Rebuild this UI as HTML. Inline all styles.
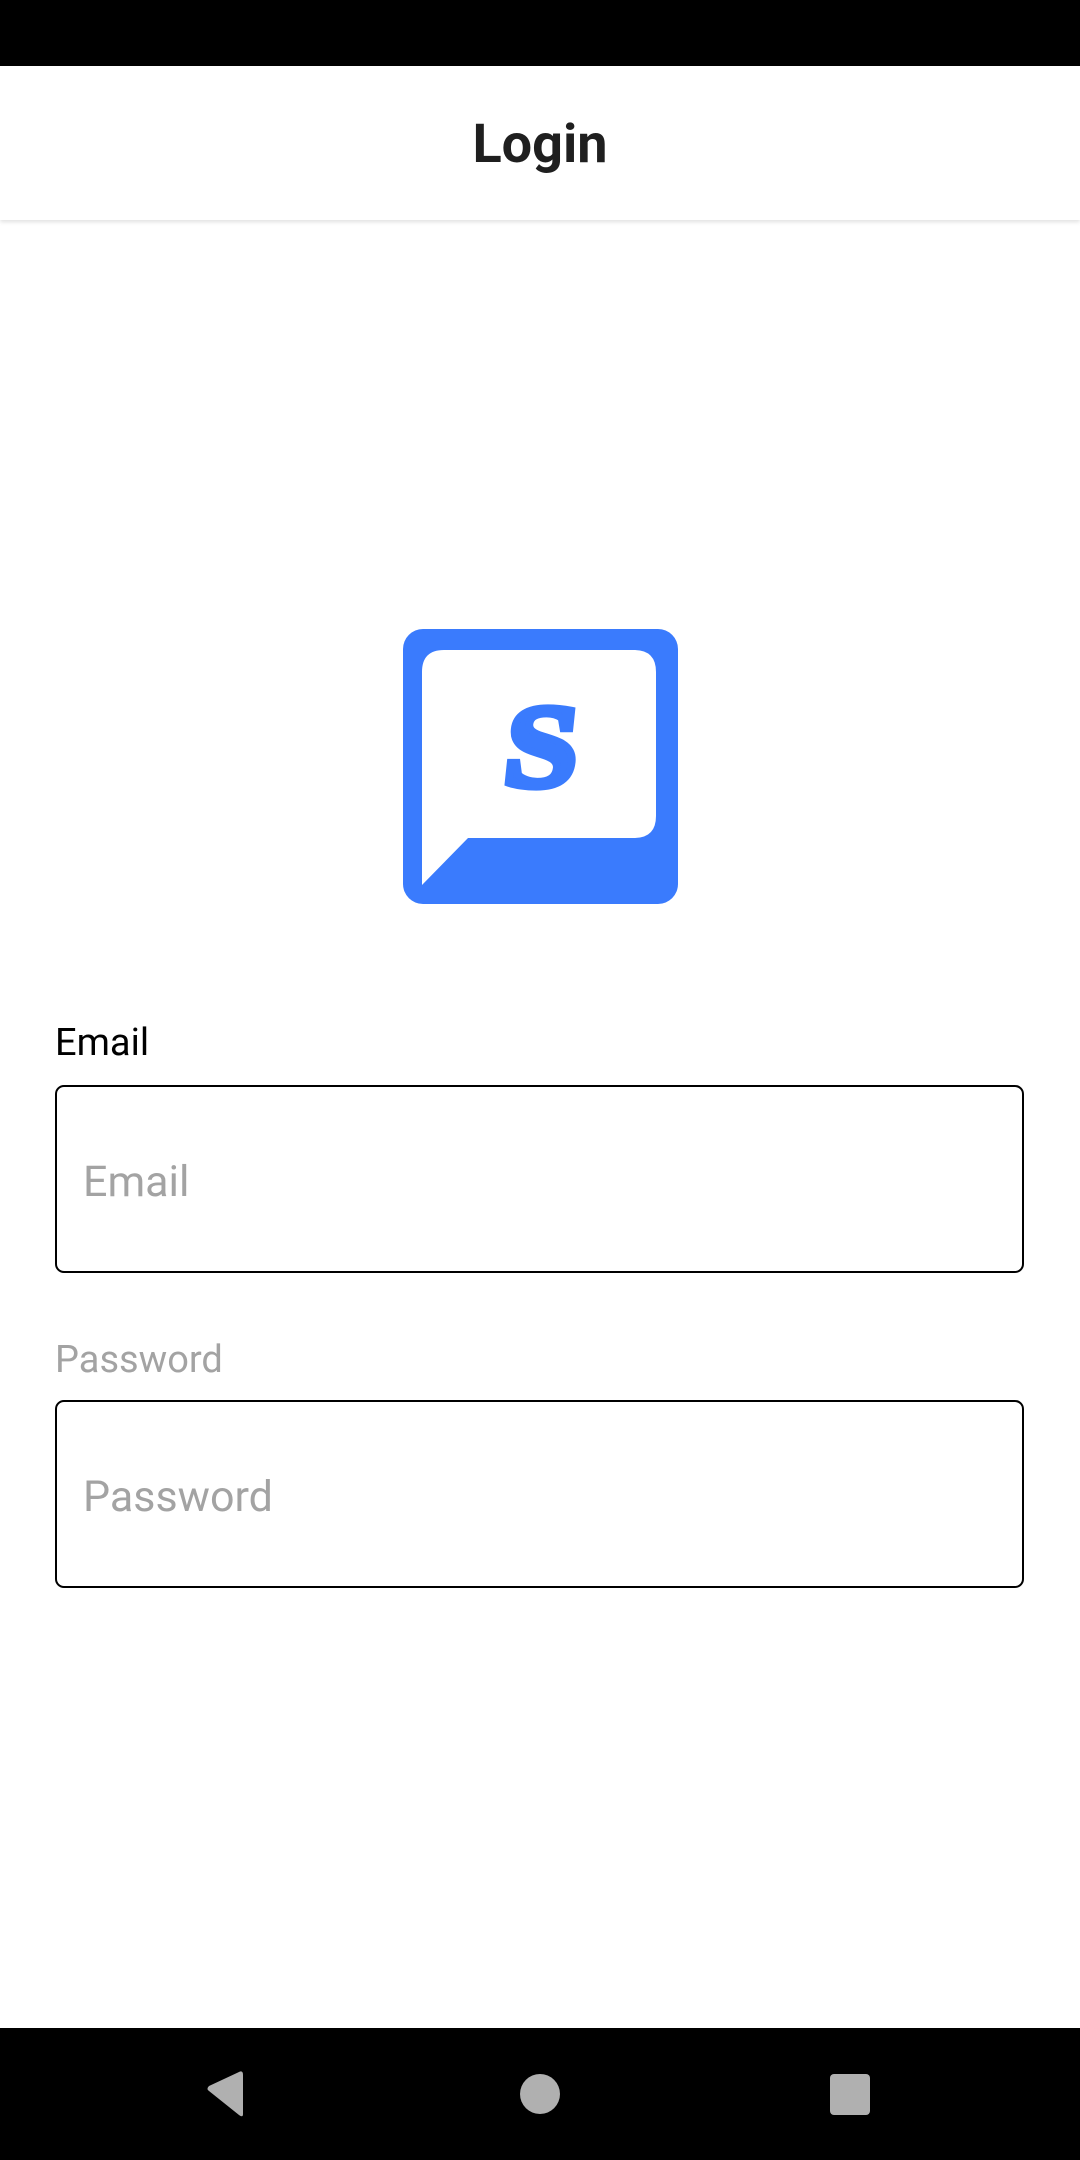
<!DOCTYPE html>
<html><head><meta charset="utf-8"><style>
html,body{margin:0;padding:0;width:1080px;height:2160px;background:#fff;overflow:hidden;font-family:"Roboto","Liberation Sans",sans-serif;position:relative}
.abs{position:absolute}
</style></head><body>
<div class="abs" style="left:0;top:0;width:1080px;height:66px;background:#000"></div>
<div class="abs" style="left:0;top:66px;width:1080px;height:154px;background:#fff;box-shadow:0 2px 4px rgba(0,0,0,0.12)"></div>
<div class="abs" style="left:0;top:112px;width:1080px;text-align:center;font-size:54px;line-height:66px;font-weight:bold;color:#1f1f1f">Login</div>

<svg class="abs" style="left:403px;top:629px" width="275" height="275" viewBox="0 0 275 275">
<rect x="0" y="0" width="275" height="275" rx="20" fill="#3a7bfd"/>
<path d="M41 21 H231 Q253 21 253 43 V187 Q253 209 231 209 H65 L19 256 V43 Q19 21 41 21 Z" fill="#fff"/>
<text x="0" y="0" text-anchor="middle" font-family="Liberation Serif, serif" font-weight="bold" font-size="118" fill="#3a7bfd" stroke="#3a7bfd" stroke-width="7" stroke-linejoin="miter" transform="translate(135,157) skewX(-6) scale(1.12,1)">S</text>
</svg>

<div class="abs" style="left:55px;top:1019px;font-size:38px;line-height:48px;color:#000">Email</div>
<div class="abs" style="left:55px;top:1085px;width:965px;height:184px;border:2.5px solid #000;border-radius:9px"></div>
<div class="abs" style="left:83px;top:1155px;font-size:43px;line-height:54px;color:#a3a3a3">Email</div>

<div class="abs" style="left:55px;top:1336px;font-size:38px;line-height:48px;color:#a3a3a3">Password</div>
<div class="abs" style="left:55px;top:1400px;width:965px;height:184px;border:2.5px solid #000;border-radius:9px"></div>
<div class="abs" style="left:83px;top:1470px;font-size:43px;line-height:54px;color:#a3a3a3">Password</div>

<div class="abs" style="left:0;top:2028px;width:1080px;height:132px;background:#000"></div>
<svg class="abs" style="left:0;top:2028px" width="1080" height="132">
<path d="M243 47 L243 86 Q243 90 239 87 L209 63 Q206 61 209 58 L239 44 Q243 42 243 47 Z" fill="#b0b0b0"/>
<ellipse cx="540" cy="66" rx="20" ry="20" fill="#b0b0b0"/>
<rect x="830" y="46" width="40" height="41" rx="4" fill="#b0b0b0"/>
</svg>
</body></html>
